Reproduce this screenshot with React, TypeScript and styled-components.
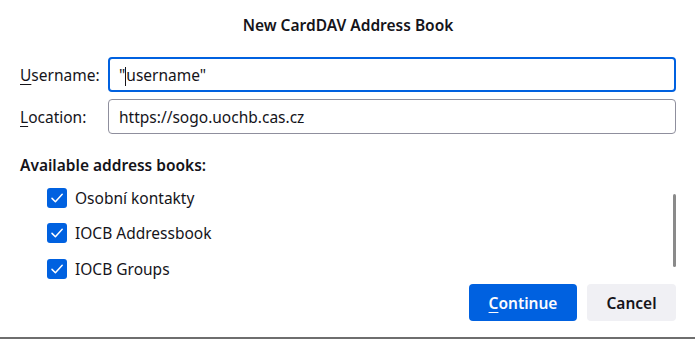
import styled, { createGlobalStyle } from "styled-components";

const GlobalStyle = createGlobalStyle`
  html, body {
    margin: 0;
    padding: 0;
    background: #ffffff;
  }
  body {
    font-family: "Noto Sans", "Open Sans", sans-serif;
    color: #15141a;
  }
`;

const BOOKS = ["Osobní kontakty", "IOCB Addressbook", "IOCB Groups"];

const Dialog = styled.div`
  box-sizing: border-box;
  width: 695px;
  height: 339px;
  display: flex;
  flex-direction: column;
  background: #fff;
  border-bottom: 2px solid #6e6e6e;
  padding: 0 19px 0 20px;
`;

const Title = styled.h1`
  margin: 14px 0 0;
  font-size: 15.5px;
  font-weight: 600;
  text-align: center;
  line-height: 22px;
`;

const Form = styled.div`
  display: grid;
  grid-template-columns: 88px 1fr;
  row-gap: 7px;
  align-items: center;
  margin-top: 21px;
`;

const Label = styled.label`
  font-size: 15.5px;
  line-height: 22px;

  & > u {
    text-decoration-thickness: 1px;
    text-underline-offset: 3px;
  }
`;

const Field = styled.div<{ focused?: boolean }>`
  box-sizing: border-box;
  height: 35px;
  display: flex;
  align-items: center;
  border-radius: 4px;
  font-size: 15.5px;
  border: ${({ focused }) => (focused ? "2px solid #0061e0" : "1px solid #8f8f9d")};
  padding: 0 10px 0 ${({ focused }) => (focused ? "9px" : "10px")};
`;

const Caret = styled.span`
  display: inline-block;
  width: 1px;
  height: 19px;
  background: #15141a;
  margin: 0 0 -3px;
`;

const SectionHeading = styled.h2`
  margin: 20px 0 0;
  font-size: 15.5px;
  font-weight: 600;
  line-height: 22px;
`;

const ListArea = styled.div`
  position: relative;
  flex: 1 1 0;
  min-height: 0;
  overflow: hidden;
  padding: 4px 0 0 27px;
`;

const Row = styled.div`
  display: flex;
  align-items: center;
  gap: 8px;
  height: 35.5px;
  font-size: 15.5px;
`;

const Box = styled.span`
  width: 20px;
  height: 20px;
  border-radius: 3px;
  background: #0061e0;
  display: flex;
  align-items: center;
  justify-content: center;
`;

const Thumb = styled.div`
  position: absolute;
  right: 0;
  top: 18px;
  width: 3px;
  height: 73px;
  border-radius: 2px;
  background: #8a8a8a;
`;

const Footer = styled.div`
  display: flex;
  justify-content: flex-end;
  gap: 10px;
  margin-bottom: 16px;
`;

const Button = styled.button<{ primary?: boolean }>`
  height: 37px;
  border: none;
  border-radius: 4px;
  font-family: inherit;
  font-size: 15.5px;
  font-weight: 600;
  padding: 0;
  width: ${({ primary }) => (primary ? "108px" : "89px")};
  background: ${({ primary }) => (primary ? "#0061e0" : "#f0f0f4")};
  color: ${({ primary }) => (primary ? "#fbfbfe" : "#15141a")};

  & > u {
    text-underline-offset: 3px;
  }
`;

const Check = () => (
  <svg width="14" height="14" viewBox="0 0 14 14" fill="none">
    <path d="M2 7.4 L5.4 10.8 L12.2 3.2" stroke="#fff" strokeWidth="1.5" strokeLinecap="round" strokeLinejoin="round" />
  </svg>
);

export default function App() {
  return (
    <>
      <GlobalStyle />
      <Dialog>
        <Title>New CardDAV Address Book</Title>
        <Form>
          <Label>
            <u>U</u>sername:
          </Label>
          <Field focused>
            "<Caret />username"
          </Field>
          <Label>
            <u>L</u>ocation:
          </Label>
          <Field>https://sogo.uochb.cas.cz</Field>
        </Form>
        <SectionHeading>Available address books:</SectionHeading>
        <ListArea>
          {BOOKS.map((book) => (
            <Row key={book}>
              <Box>
                <Check />
              </Box>
              {book}
            </Row>
          ))}
          <Thumb />
        </ListArea>
        <Footer>
          <Button primary>
            <u>C</u>ontinue
          </Button>
          <Button>Cancel</Button>
        </Footer>
      </Dialog>
    </>
  );
}
